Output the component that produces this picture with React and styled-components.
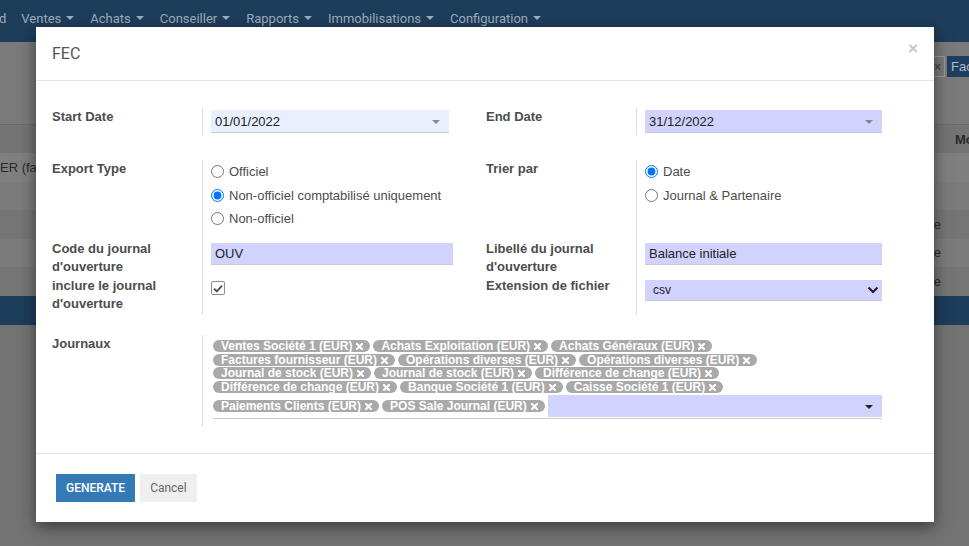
import React from "react";
import styled, { createGlobalStyle } from "styled-components";

const GlobalStyle = createGlobalStyle`
    * {
        box-sizing: border-box;
    }
    body {
        margin: 0;
        background: #737373;
        font-family: "Liberation Sans", Arial, sans-serif;
        overflow: hidden;
    }
`;

const JOURNALS = [
    "Ventes Société 1 (EUR)",
    "Achats Exploitation (EUR)",
    "Achats Généraux (EUR)",
    "Factures fournisseur (EUR)",
    "Opérations diverses (EUR)",
    "Opérations diverses (EUR)",
    "Journal de stock (EUR)",
    "Journal de stock (EUR)",
    "Différence de change (EUR)",
    "Différence de change (EUR)",
    "Banque Société 1 (EUR)",
    "Caisse Société 1 (EUR)",
    "Paiements Clients (EUR)",
    "POS Sale Journal (EUR)",
];

const MENUS = ["Ventes", "Achats", "Conseiller", "Rapports", "Immobilisations", "Configuration"];

// page derrière le dialogue (déjà assombrie)
const Screen = styled.div`
    position: relative;
    width: 969px;
    height: 546px;
    overflow: hidden;
    background: #737373;
`;

const NavBar = styled.div`
    display: flex;
    height: 42px;
    background: #1d3d5b;
    font-family: Roboto, sans-serif;
    font-size: 13px;
    color: #9dacbb;
`;

const NavItem = styled.div`
    display: flex;
    align-items: center;
    height: 36px;
    padding: ${(p) => (p.$first ? "0 7px 0 0" : "0 8px")};
    margin-left: ${(p) => (p.$first ? "-1px" : "0")};
`;

const Caret = styled.span`
    display: inline-block;
    margin-left: ${(p) => p.$gap ?? 5}px;
    border-top: ${(p) => p.$size || 4}px solid ${(p) => p.$color || "currentColor"};
    border-left: ${(p) => p.$size || 4}px solid transparent;
    border-right: ${(p) => p.$size || 4}px solid transparent;
`;

const ControlPanel = styled.div`
    display: grid;
    grid-template-columns: 930px 1fr;
    height: 83px;
    padding-top: 14px;
    background: #7a7a7a;
    border-bottom: 1px solid #6a6a6a;
`;

const Facets = styled.div`
    display: flex;
    gap: 2px;
    height: 21px;
    overflow: hidden;
`;

const FacetRemove = styled.div`
    flex: 0 0 15px;
    display: flex;
    align-items: center;
    justify-content: center;
    border: 1px solid #9a9a9a;
    color: #444;
    font-size: 12px;
    font-weight: 700;
`;

const Facet = styled.div`
    padding: 0 4px;
    background: #1f3f5e;
    color: #aebccb;
    font-size: 13px;
    line-height: 21px;
    white-space: nowrap;
`;

const ListRow = styled.div`
    display: grid;
    grid-template-columns: 1fr 28px;
    align-items: center;
    height: ${(p) => p.$h || 28.5}px;
    background: ${(p) => p.$bg};
    color: #2a2a2a;
    font-size: 13px;
    font-weight: ${(p) => (p.$head ? 700 : 400)};
`;

const ListCell = styled.div`
    white-space: nowrap;
    overflow: hidden;
    text-align: ${(p) => p.$align || "left"};
    padding-left: ${(p) => p.$pad || 0}px;
`;

// dialogue FEC
const Dialog = styled.div`
    position: absolute;
    left: 36px;
    top: 27px;
    width: 898px;
    background: #fff;
    box-shadow: 0 5px 15px rgba(0, 0, 0, 0.5);
`;

const DialogHeader = styled.div`
    display: flex;
    align-items: center;
    justify-content: space-between;
    height: 54px;
    padding: 0 16px;
    border-bottom: 1px solid #e5e5e5;
`;

const DialogTitle = styled.h4`
    margin: 0;
    font-family: Roboto, sans-serif;
    font-size: 16px;
    font-weight: 400;
    color: #555;
`;

const CloseButton = styled.button`
    margin-bottom: 10px;
    padding: 0;
    border: 0;
    background: none;
    font-family: "Liberation Sans", Arial, sans-serif;
    font-size: 17px;
    font-weight: 700;
    line-height: 1;
    color: #c4c4c4;
`;

const DialogBody = styled.div`
    padding: 27px 49px 26px 16px;
`;

const FieldGrid = styled.div`
    display: grid;
    grid-template-columns: 150px 254px 180px 1fr;
    margin-top: ${(p) => p.$gap || 0}px;
    color: #4c4c4c;
    font-size: 13px;
`;

const Label = styled.div`
    padding: ${(p) => p.$top || 0}px 0 ${(p) => p.$bottom || 0}px ${(p) => (p.$right ? 30 : 0)}px;
    font-weight: 700;
    line-height: 18px;
`;

const Field = styled.div`
    grid-column: ${(p) => (p.$span ? "2 / -1" : "auto")};
    padding: ${(p) => p.$top || 0}px 3px ${(p) => p.$bottom || 0}px ${(p) => p.$left || 8}px;
    border-left: 1px solid #ddd;
`;

const InputWrap = styled.div`
    position: relative;
    width: ${(p) => (p.$w ? `${p.$w}px` : "100%")};
`;

const TextInput = styled.input`
    display: block;
    width: 100%;
    height: ${(p) => p.$h || 22}px;
    padding: 0 4px;
    border: 0;
    border-bottom: 1px solid #c8c8c8;
    background: ${(p) => p.$bg || "#d2d2ff"};
    font: 13px "Liberation Sans", Arial, sans-serif;
    color: #222;
    outline: none;
`;

const DropCaret = styled.span`
    position: absolute;
    right: 9px;
    top: 10px;
    border-top: 4px solid ${(p) => p.$color || "#888"};
    border-left: 4px solid transparent;
    border-right: 4px solid transparent;
`;

const RadioRow = styled.label`
    display: flex;
    align-items: center;
    height: 23.5px;
    color: #4c4c4c;
`;

const Radio = styled.input.attrs({ type: "radio" })`
    width: 13px;
    height: 13px;
    margin: 0 5px 0 0;
`;

const CheckBox = styled.span`
    display: flex;
    align-items: center;
    justify-content: center;
    width: 14px;
    height: 14px;
    border: 1px solid #8a8a8a;
    border-radius: 2px;
`;

const SelectBox = styled.div`
    display: flex;
    align-items: center;
    justify-content: space-between;
    height: 21px;
    padding: 0 3px 0 8px;
    background: #d2d2ff;
    border-bottom: 1px solid #c8c8c8;
    font-size: 12px;
    color: #222;
`;

const TagBox = styled.div`
    display: flex;
    flex-wrap: wrap;
    align-items: center;
    padding-bottom: 1px;
    border-bottom: 1px solid #ccc;
`;

const Tag = styled.span`
    display: inline-flex;
    align-items: center;
    gap: 4px;
    height: 12px;
    margin: 0.875px 3px 0.875px 0;
    padding: 1px 7px 0 8px;
    border-radius: 6px;
    background: #a9a9a9;
    color: #fff;
    font-size: 12px;
    font-weight: 700;
    line-height: 11px;
    white-space: nowrap;
`;

const TagInput = styled.div`
    position: relative;
    flex: 1 1 120px;
    height: 22px;
    margin-top: 1px;
    background: #d2d2ff;
`;

const DialogFooter = styled.div`
    display: flex;
    gap: 5px;
    padding: 20px;
    border-top: 1px solid #e5e5e5;
`;

const Button = styled.button`
    height: 28px;
    padding: 0 10px;
    border: 0;
    border-radius: 0;
    background: ${(p) => (p.$primary ? "#337ab7" : "#efefef")};
    color: ${(p) => (p.$primary ? "#fff" : "#666")};
    font-family: Roboto, sans-serif;
    font-size: 12px;
    font-weight: ${(p) => (p.$primary ? 500 : 400)};
    text-transform: ${(p) => (p.$primary ? "uppercase" : "none")};
`;

function TagRemove() {
    return (
        <svg width="7" height="7" viewBox="0 0 7 7">
            <path d="M1 1 L6 6 M6 1 L1 6" stroke="#fff" strokeWidth="2.2" strokeLinecap="round" />
        </svg>
    );
}

function Chevron() {
    return (
        <svg width="12" height="8" viewBox="0 0 12 8">
            <path d="M1.5 1.5 L6 6 L10.5 1.5" fill="none" stroke="#222" strokeWidth="2.2" />
        </svg>
    );
}

function Check() {
    return (
        <svg width="10" height="9" viewBox="0 0 10 9">
            <path d="M1 4.8 L3.8 7.3 L9 1.6" fill="none" stroke="#555" strokeWidth="2" />
        </svg>
    );
}

export default function App() {
    return (
        <Screen>
            <GlobalStyle />
            <NavBar>
                <NavItem $first>d</NavItem>
                {MENUS.map((m) => (
                    <NavItem key={m}>
                        {m}
                        <Caret $size={4} />
                    </NavItem>
                ))}
            </NavBar>
            <ControlPanel>
                <div />
                <Facets>
                    <FacetRemove>×</FacetRemove>
                    <Facet>Facture</Facet>
                </Facets>
            </ControlPanel>
            <ListRow $head $h={28} $bg="#747474">
                <ListCell />
                <ListCell $pad={14}>Montant</ListCell>
            </ListRow>
            <ListRow $bg="#7f7f7f">
                <ListCell>ER (facture client)</ListCell>
                <ListCell />
            </ListRow>
            <ListRow $bg="#7b7b7b">
                <ListCell />
                <ListCell />
            </ListRow>
            <ListRow $bg="#757575">
                <ListCell $align="right">Comptabilisée</ListCell>
                <ListCell />
            </ListRow>
            <ListRow $bg="#7b7b7b">
                <ListCell $align="right">Comptabilisée</ListCell>
                <ListCell />
            </ListRow>
            <ListRow $bg="#757575">
                <ListCell $align="right">Comptabilisée</ListCell>
                <ListCell />
            </ListRow>
            <ListRow $h={29} $bg="#1d3d5b">
                <ListCell />
                <ListCell />
            </ListRow>

            <Dialog>
                <DialogHeader>
                    <DialogTitle>FEC</DialogTitle>
                    <CloseButton>×</CloseButton>
                </DialogHeader>
                <DialogBody>
                    <FieldGrid>
                        <Label>Start Date</Label>
                        <Field $top={2} $bottom={2}>
                            <InputWrap $w={238}>
                                <TextInput $h={23} $bg="#e8f0fe" readOnly value="01/01/2022" />
                                <DropCaret />
                            </InputWrap>
                        </Field>
                        <Label $right>End Date</Label>
                        <Field $top={2} $bottom={2}>
                            <InputWrap>
                                <TextInput $h={23} readOnly value="31/12/2022" />
                                <DropCaret />
                            </InputWrap>
                        </Field>
                    </FieldGrid>

                    <FieldGrid $gap={25}>
                        <Label>Export Type</Label>
                        <Field $bottom={5.5}>
                            <RadioRow>
                                <Radio name="export" />
                                Officiel
                            </RadioRow>
                            <RadioRow>
                                <Radio name="export" defaultChecked />
                                Non-officiel comptabilisé uniquement
                            </RadioRow>
                            <RadioRow>
                                <Radio name="export" />
                                Non-officiel
                            </RadioRow>
                        </Field>
                        <Label $right>Trier par</Label>
                        <Field>
                            <RadioRow>
                                <Radio name="sort" defaultChecked />
                                Date
                            </RadioRow>
                            <RadioRow>
                                <Radio name="sort" />
                                Journal &amp; Partenaire
                            </RadioRow>
                        </Field>

                        <Label $top={4}>
                            Code du journal
                            <br />
                            d'ouverture
                        </Label>
                        <Field $top={7}>
                            <TextInput readOnly value="OUV" />
                        </Field>
                        <Label $right $top={4}>
                            Libellé du journal
                            <br />
                            d'ouverture
                        </Label>
                        <Field $top={7}>
                            <TextInput readOnly value="Balance initiale" />
                        </Field>

                        <Label $top={1} $bottom={2}>
                            inclure le journal
                            <br />
                            d'ouverture
                        </Label>
                        <Field $top={5}>
                            <CheckBox>
                                <Check />
                            </CheckBox>
                        </Field>
                        <Label $right $top={1}>
                            Extension de fichier
                        </Label>
                        <Field $top={4}>
                            <SelectBox>
                                csv
                                <Chevron />
                            </SelectBox>
                        </Field>
                    </FieldGrid>

                    <FieldGrid $gap={20}>
                        <Label>Journaux</Label>
                        <Field $span $top={4} $bottom={8} $left={10}>
                            <TagBox>
                                {JOURNALS.map((j, i) => (
                                    <Tag key={i}>
                                        {j}
                                        <TagRemove />
                                    </Tag>
                                ))}
                                <TagInput>
                                    <DropCaret $color="#222" />
                                </TagInput>
                            </TagBox>
                        </Field>
                    </FieldGrid>
                </DialogBody>
                <DialogFooter>
                    <Button $primary>Generate</Button>
                    <Button>Cancel</Button>
                </DialogFooter>
            </Dialog>
        </Screen>
    );
}
